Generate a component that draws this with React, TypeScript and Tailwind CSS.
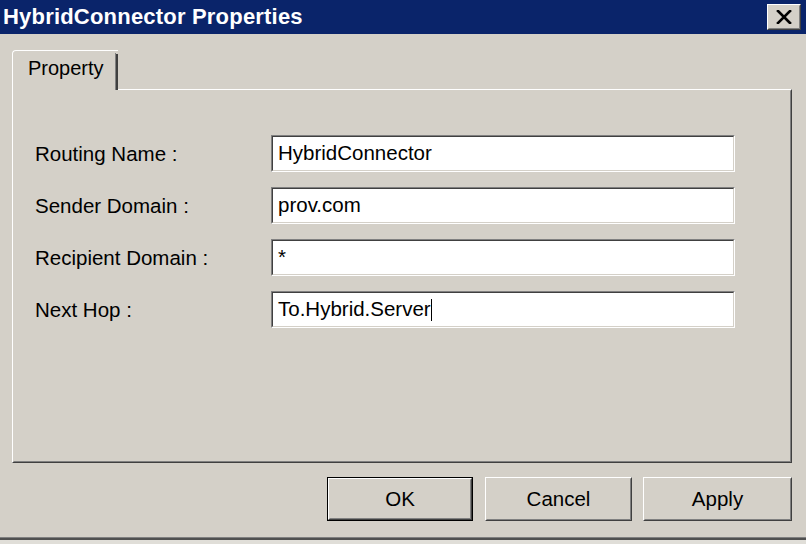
import React from "react";

const font = { fontFamily: '"Liberation Sans", Arial, sans-serif' };

function Raised({
  children,
  width,
  isDefault,
}: {
  children: React.ReactNode;
  width: string;
  isDefault?: boolean;
}) {
  const inner = (
    <div className="h-full border border-t-white border-l-white border-r-[#404040] border-b-[#404040]">
      <div className="h-full flex items-center justify-center border border-t-[#d4d0c8] border-l-[#d4d0c8] border-r-[#808080] border-b-[#808080] text-[20.5px] text-black leading-none">
        {children}
      </div>
    </div>
  );
  if (isDefault) {
    return <div className={`${width} h-[44px] border border-black`}>{inner}</div>;
  }
  return <div className={`${width} h-[44px]`}>{inner}</div>;
}

function Field({ label, value, caret }: { label: string; value: string; caret?: boolean }) {
  return (
    <div className="flex items-center h-[37px]">
      <div className="w-[236px] text-[20.5px] text-black leading-none pt-[2px]">{label}</div>
      <div className="w-[464px] h-[37px] border border-t-[#808080] border-l-[#808080] border-r-white border-b-white">
        <div className="h-full bg-white border border-t-[#404040] border-l-[#404040] border-r-[#d4d0c8] border-b-[#d4d0c8] flex items-center pl-[5px] text-[20.5px] text-black leading-none whitespace-pre">
          <span>{value}</span>
          {caret && <span className="inline-block w-px h-[22px] bg-black" />}
        </div>
      </div>
    </div>
  );
}

export default function App() {
  return (
    <div className="w-[806px] h-[544px] bg-[#d4d0c8] flex flex-col overflow-hidden" style={font}>
      {/* Title bar */}
      <div className="h-[34px] bg-[#0a246a] flex items-center justify-between pl-[3px] pr-[5px]">
        <div className="text-white font-bold text-[22px] leading-none tracking-[0.2px]">HybridConnector Properties</div>
        <div className="w-[34px] h-[26px] border border-t-white border-l-white border-r-[#404040] border-b-[#404040]">
          <div className="h-full flex items-center justify-center bg-[#d4d0c8] border border-t-[#d4d0c8] border-l-[#d4d0c8] border-r-[#808080] border-b-[#808080]">
            <svg width="16" height="14" viewBox="0 0 16 14">
              <path d="M2 1 L14 13 M14 1 L2 13" stroke="#000" strokeWidth="2.6" strokeLinecap="square" />
            </svg>
          </div>
        </div>
      </div>

      {/* Body */}
      <div className="flex flex-col pl-[12px] pr-[14px] pt-[16px]">
        <div className="flex">
          <div className="relative z-10 -mb-px h-[40px] w-[106px] bg-[#d4d0c8] border-l border-t border-l-white border-t-white rounded-tl-[4px] flex">
            <div className="flex-1 pl-[15px] pt-[7px] text-[20px] leading-none text-black">Property</div>
            <div className="w-[3px] flex">
              <div className="w-px bg-[#808080] mt-[2px]" />
              <div className="w-[2px] bg-[#404040] mt-[3px]" />
            </div>
          </div>
        </div>
        <div className="h-[374px] border border-t-white border-l-white border-r-[#404040] border-b-[#404040]">
          <div className="h-full border border-t-[#d4d0c8] border-l-[#d4d0c8] border-r-[#808080] border-b-[#808080] pl-[21px] pt-[44px] flex flex-col gap-[15px]">
            <Field label="Routing Name :" value="HybridConnector" />
            <Field label="Sender Domain :" value="prov.com" />
            <Field label="Recipient Domain :" value="*" />
            <Field label="Next Hop :" value="To.Hybrid.Server" caret />
          </div>
        </div>
        <div className="flex justify-end mt-[14px]">
          <Raised width="w-[146px]" isDefault>
            OK
          </Raised>
          <div className="w-[12px]" />
          <Raised width="w-[147px]">Cancel</Raised>
          <div className="w-[11px]" />
          <Raised width="w-[149px]">Apply</Raised>
        </div>
      </div>
      <div className="flex-1" />
      <div className="h-px bg-[#808080]" />
      <div className="h-[2px] bg-[#505050]" />
      <div className="h-[4px] bg-[#e0ded8]" />
    </div>
  );
}
